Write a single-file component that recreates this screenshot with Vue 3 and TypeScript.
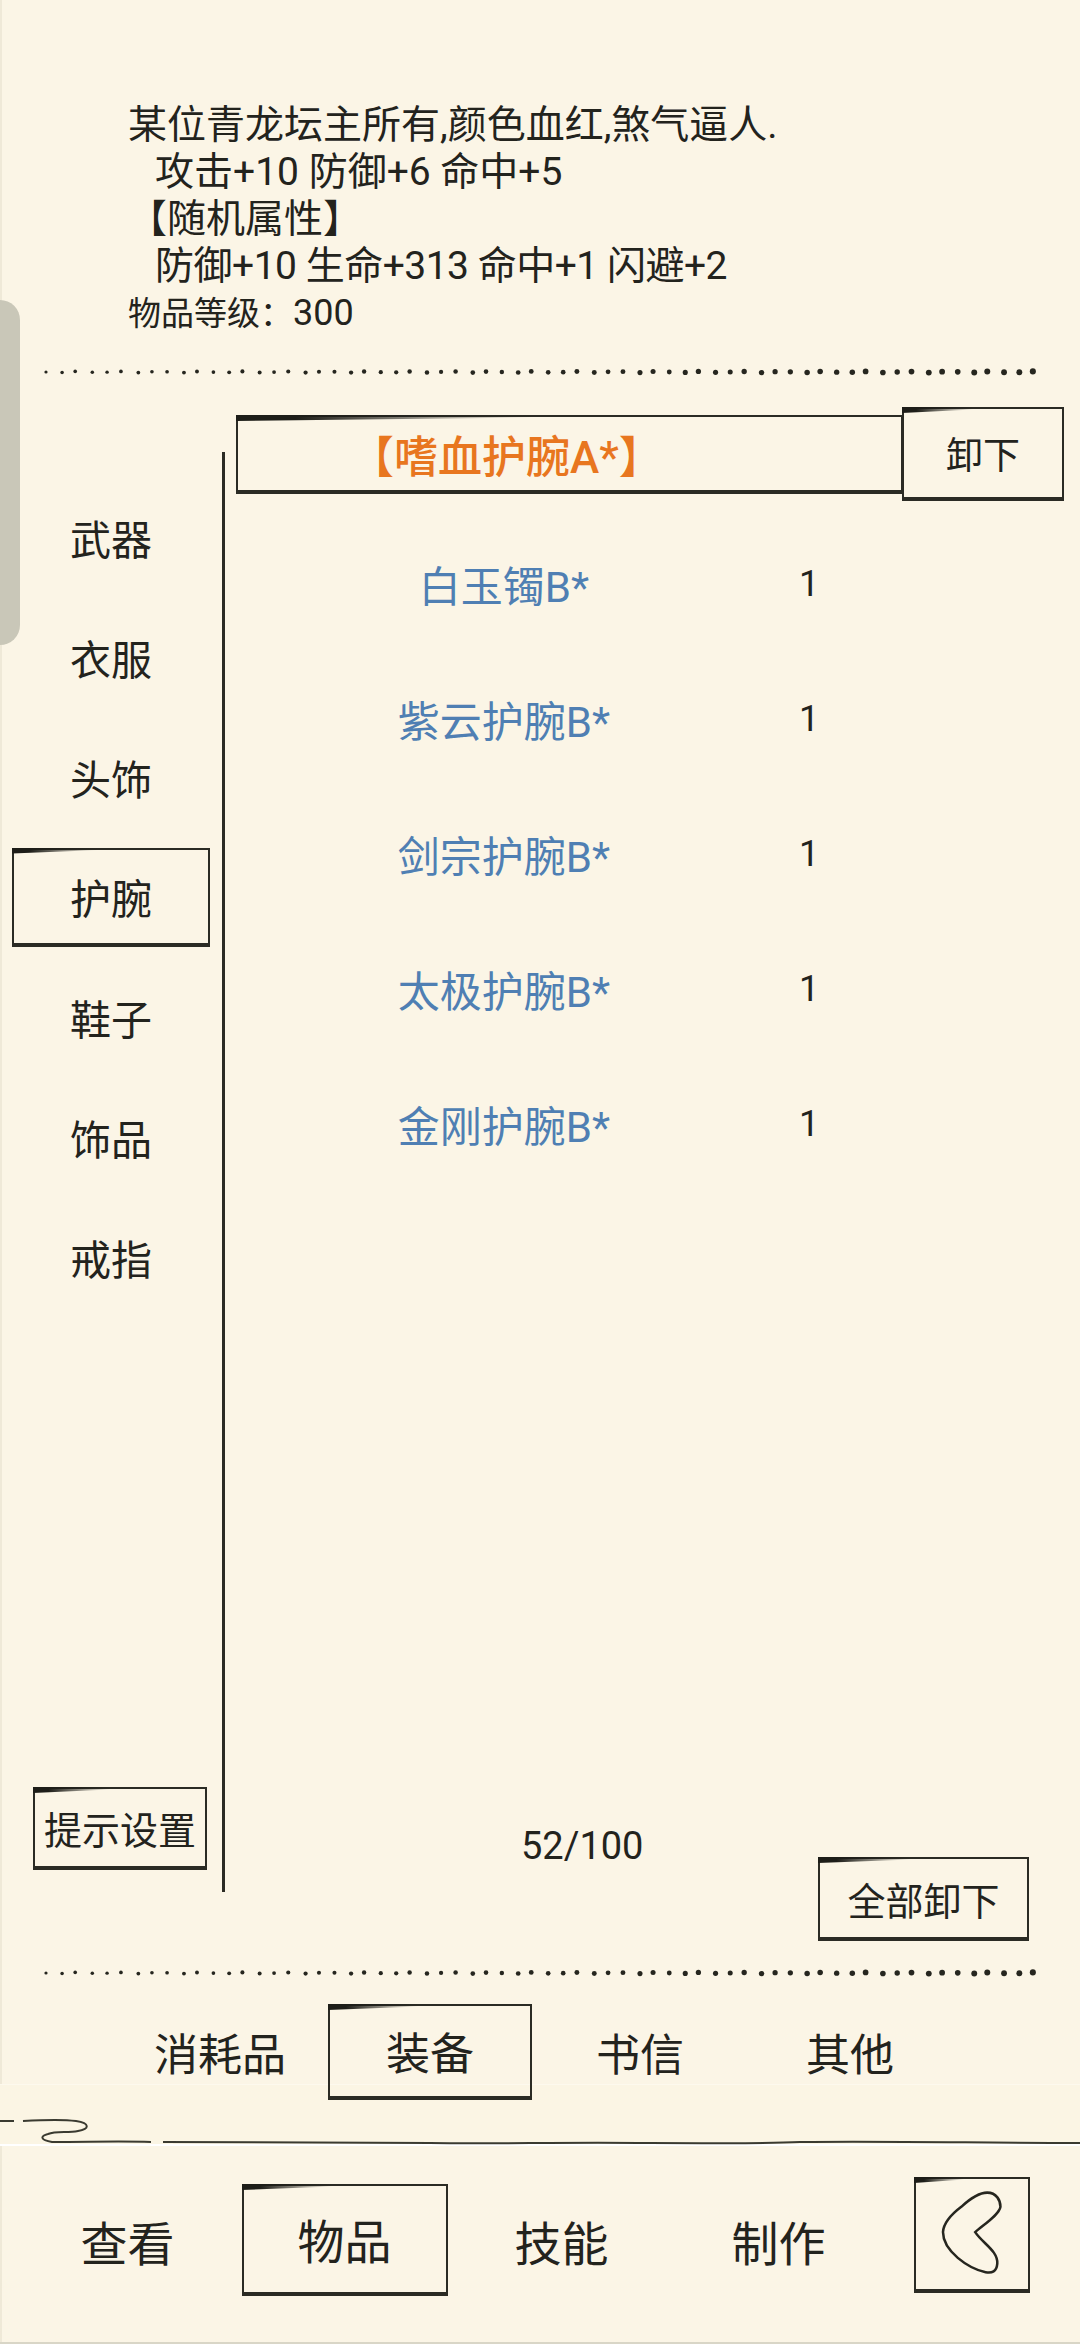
<script setup lang="ts">
import { computed, ref } from "vue";

const categories = ["武器", "衣服", "头饰", "护腕", "鞋子", "饰品", "戒指"];
const activeCategory = ref("护腕");

const items = [
	{ name: "白玉镯B*", count: 1 },
	{ name: "紫云护腕B*", count: 1 },
	{ name: "剑宗护腕B*", count: 1 },
	{ name: "太极护腕B*", count: 1 },
	{ name: "金刚护腕B*", count: 1 },
];

const tabs = ["消耗品", "装备", "书信", "其他"];
const navs = ["查看", "物品", "技能", "制作"];

// hand drawn dots: small and uneven on the left, bigger on the right
const dots = computed(() =>
{
	const list: { x: number; y: number; r: number }[] = [];
	for (let i = 0; i < 66; i++)
	{
		const wobble = Math.sin(i * 2.3) * 0.6;
		list.push({
			x: 4 + i * 15.2 + wobble * 2,
			y: 4 + wobble,
			r: 1.6 + (i / 66) * 1.3 + Math.abs(wobble) * 0.3,
		});
	}
	return list;
});
</script>

<template>
	<div class="page">
		<div class="handle" />

		<section class="desc">
			<p>某位青龙坛主所有,颜色血红,煞气逼人.</p>
			<p class="indent">攻击+10 防御+6 命中+5</p>
			<p>【随机属性】</p>
			<p class="indent tight">防御+10 生命+313 命中+1 闪避+2</p>
			<p class="level">物品等级：<span>300</span></p>
		</section>

		<svg class="dotted" width="1000" height="8" viewBox="0 0 1000 8">
			<circle v-for="(d, i) in dots" :key="i" :cx="d.x" :cy="d.y" :r="d.r" fill="#26261f" />
		</svg>

		<section class="middle">
			<aside class="sidebar">
				<div v-for="c in categories" :key="c" class="cat">
					<span :class="['cat-label', { sketch: c === activeCategory }]">{{ c }}</span>
				</div>
				<button class="sketch settings">提示设置</button>
			</aside>

			<div class="main">
				<div class="equipped">
					<div class="sketch equipped-name"><span>【嗜血护腕A*】</span></div>
					<button class="sketch unequip">卸下</button>
				</div>

				<ul class="list">
					<li v-for="item in items" :key="item.name" class="row">
						<span class="item-name">{{ item.name }}</span>
						<span class="item-count">{{ item.count }}</span>
					</li>
				</ul>

				<div class="footer">
					<span class="capacity">52/100</span>
					<button class="sketch unequip-all">全部卸下</button>
				</div>
			</div>
		</section>

		<svg class="dotted" width="1000" height="8" viewBox="0 0 1000 8">
			<circle v-for="(d, i) in dots" :key="i" :cx="d.x" :cy="d.y" :r="d.r" fill="#26261f" />
		</svg>

		<div class="tabs">
			<div v-for="t in tabs" :key="t" class="tab">
				<span :class="['tab-label', { sketch: t === '装备' }]">{{ t }}</span>
			</div>
		</div>

		<div class="band">
			<svg width="1080" height="62" viewBox="0 0 1080 62" fill="none">
				<path
					d="M0 37 H14 M23 37 C40 36 62 35 76 37 C90 39 90 45 78 47 C68 49 56 47 48 50 C40 52 40 56 52 58 C90 58 120 57 151 58 M163 58 C260 59 350 58 430 59 C500 60 560 58 650 59 C720 59 760 60 800 58 C900 57 980 59 1080 59"
					stroke="#3a3a30"
					stroke-width="2"
				/>
			</svg>
		</div>

		<nav class="nav">
			<div v-for="n in navs" :key="n" class="nav-item">
				<span :class="['nav-label', { sketch: n === '物品' }]">{{ n }}</span>
			</div>
			<button class="sketch back" aria-label="返回">
				<svg width="111" height="108" viewBox="0 0 347 342" fill="none">
					<path
						d="M138 85 C165 60 195 40 220 40 C250 40 262 65 262 85 C258 110 210 140 182 165 C205 200 255 225 252 265 C250 290 235 296 215 292 C160 280 80 225 80 165 C82 135 105 110 138 85 Z"
						stroke="#26261f"
						stroke-width="8"
					/>
				</svg>
			</button>
		</nav>
	</div>
</template>

<style>
body {
	background: #fbf5e6;
}
</style>

<style scoped>
.page {
	position: relative;
	width: 1080px;
	height: 2344px;
	overflow: hidden;
	display: flex;
	flex-direction: column;
	background: #fbf5e6;
	box-shadow: inset 2px 0 0 #efe9d8;
	color: #23231d;
	font-family: Roboto, "Noto Sans CJK SC", sans-serif;
	font-size: 41px;
}

.handle {
	position: absolute;
	left: 0;
	top: 300px;
	width: 20px;
	height: 345px;
	background: #c9c7b8;
	border-radius: 0 20px 20px 0;
}

.sketch {
	position: relative;
	box-sizing: border-box;
	border: 2px solid #2b2b24;
	border-bottom-width: 4px;
	background: transparent;
}

.sketch::before {
	content: "";
	position: absolute;
	left: -2px;
	top: -2px;
	width: 45%;
	height: 6px;
	background: linear-gradient(90deg, #1d1d18 20%, rgb(29 29 24 / 0%));
	clip-path: polygon(0 0, 100% 0, 100% 40%, 0 100%);
}

button {
	padding: 0;
	margin: 0;
	font: inherit;
	color: inherit;
	display: flex;
	align-items: center;
	justify-content: center;
}

.desc {
	box-sizing: border-box;
	height: 368px;
	padding: 102px 0 0 128px;
	font-size: 39px;
	line-height: 47px;
}

.desc p {
	margin: 0;
	white-space: nowrap;
}

.desc .indent {
	padding-left: 27px;
}

.desc .tight {
	letter-spacing: -0.5px;
}

.desc .level {
	font-size: 33px;
}

.desc .level span {
	font-size: 36px;
}

.dotted {
	display: block;
	flex: none;
	margin-left: 42px;
}

.middle {
	flex: none;
	height: 1593px;
	display: flex;
}

.sidebar {
	box-sizing: border-box;
	width: 225px;
	height: 1440px;
	margin-top: 76px;
	padding: 25px 12px 22px;
	display: flex;
	flex-direction: column;
	border-right: 3px solid #2b2b24;
}

.cat {
	height: 120px;
	display: flex;
	align-items: center;
}

.cat-label {
	width: 198px;
	height: 99px;
	display: flex;
	align-items: center;
	justify-content: center;
}

.settings {
	width: 174px;
	height: 83px;
	margin: auto 0 0 21px;
	font-size: 38px;
}

.main {
	flex: 1;
	min-width: 0;
	padding-top: 31px;
	display: flex;
	flex-direction: column;
}

.equipped {
	display: flex;
	height: 94px;
	padding-left: 11px;
}

.equipped-name {
	width: 667px;
	height: 79px;
	margin-top: 8px;
	display: flex;
	align-items: center;
	padding-left: 112px;
	color: #e8761f;
	font-size: 44px;
	font-weight: 500;
	white-space: nowrap;
}

.unequip {
	width: 162px;
	height: 94px;
	background: #fbf5e6;
	margin-left: -1px;
	font-size: 37px;
}

.list {
	list-style: none;
	margin: 15px 0 0;
	padding: 0;
}

.row {
	height: 135px;
	display: grid;
	grid-template-columns: 558px 52px;
	align-items: center;
	text-align: center;
}

.item-name {
	color: #4f7fb3;
	font-size: 42px;
}

.item-count {
	font-size: 36px;
}

.footer {
	margin-top: auto;
	margin-bottom: 28px;
	height: 112px;
	display: flex;
	align-items: flex-end;
	padding-left: 296px;
}

.capacity {
	align-self: flex-start;
	margin-top: 3px;
	font-size: 38px;
	line-height: 28px;
}

.unequip-all {
	width: 211px;
	height: 84px;
	margin-left: auto;
	margin-right: 51px;
	font-size: 38px;
}

.tabs {
	flex: none;
	box-sizing: border-box;
	height: 107px;
	padding: 27px 0 0 115px;
	display: grid;
	grid-template-columns: repeat(4, 210px);
	font-size: 44px;
	position: relative;
	z-index: 1;
}

.tab {
	display: flex;
	justify-content: center;
}

.tab-label {
	flex: none;
	width: 204px;
	height: 96px;
	display: flex;
	align-items: center;
	justify-content: center;
	white-space: nowrap;
}

.band {
	flex: none;
	height: 62px;
	background: #fbf5e4;
	border-top: 1px solid #fdf9ee;
	border-bottom: 2px solid #ffffff;
	box-sizing: border-box;
}

.band svg {
	display: block;
	margin-top: -1px;
}

.nav {
	flex: 1;
	box-sizing: border-box;
	padding: 38px 0 0 19px;
	display: grid;
	grid-template-columns: repeat(4, 217px) auto;
	align-items: start;
	font-size: 47px;
	border-bottom: 2px solid #d9d6c7;
}

.nav-item {
	display: flex;
	justify-content: center;
}

.nav-label {
	flex: none;
	width: 206px;
	height: 112px;
	padding-bottom: 2px;
	display: flex;
	align-items: center;
	justify-content: center;
}

.back {
	width: 116px;
	height: 116px;
	margin: -7px 0 0 27px;
}
</style>
